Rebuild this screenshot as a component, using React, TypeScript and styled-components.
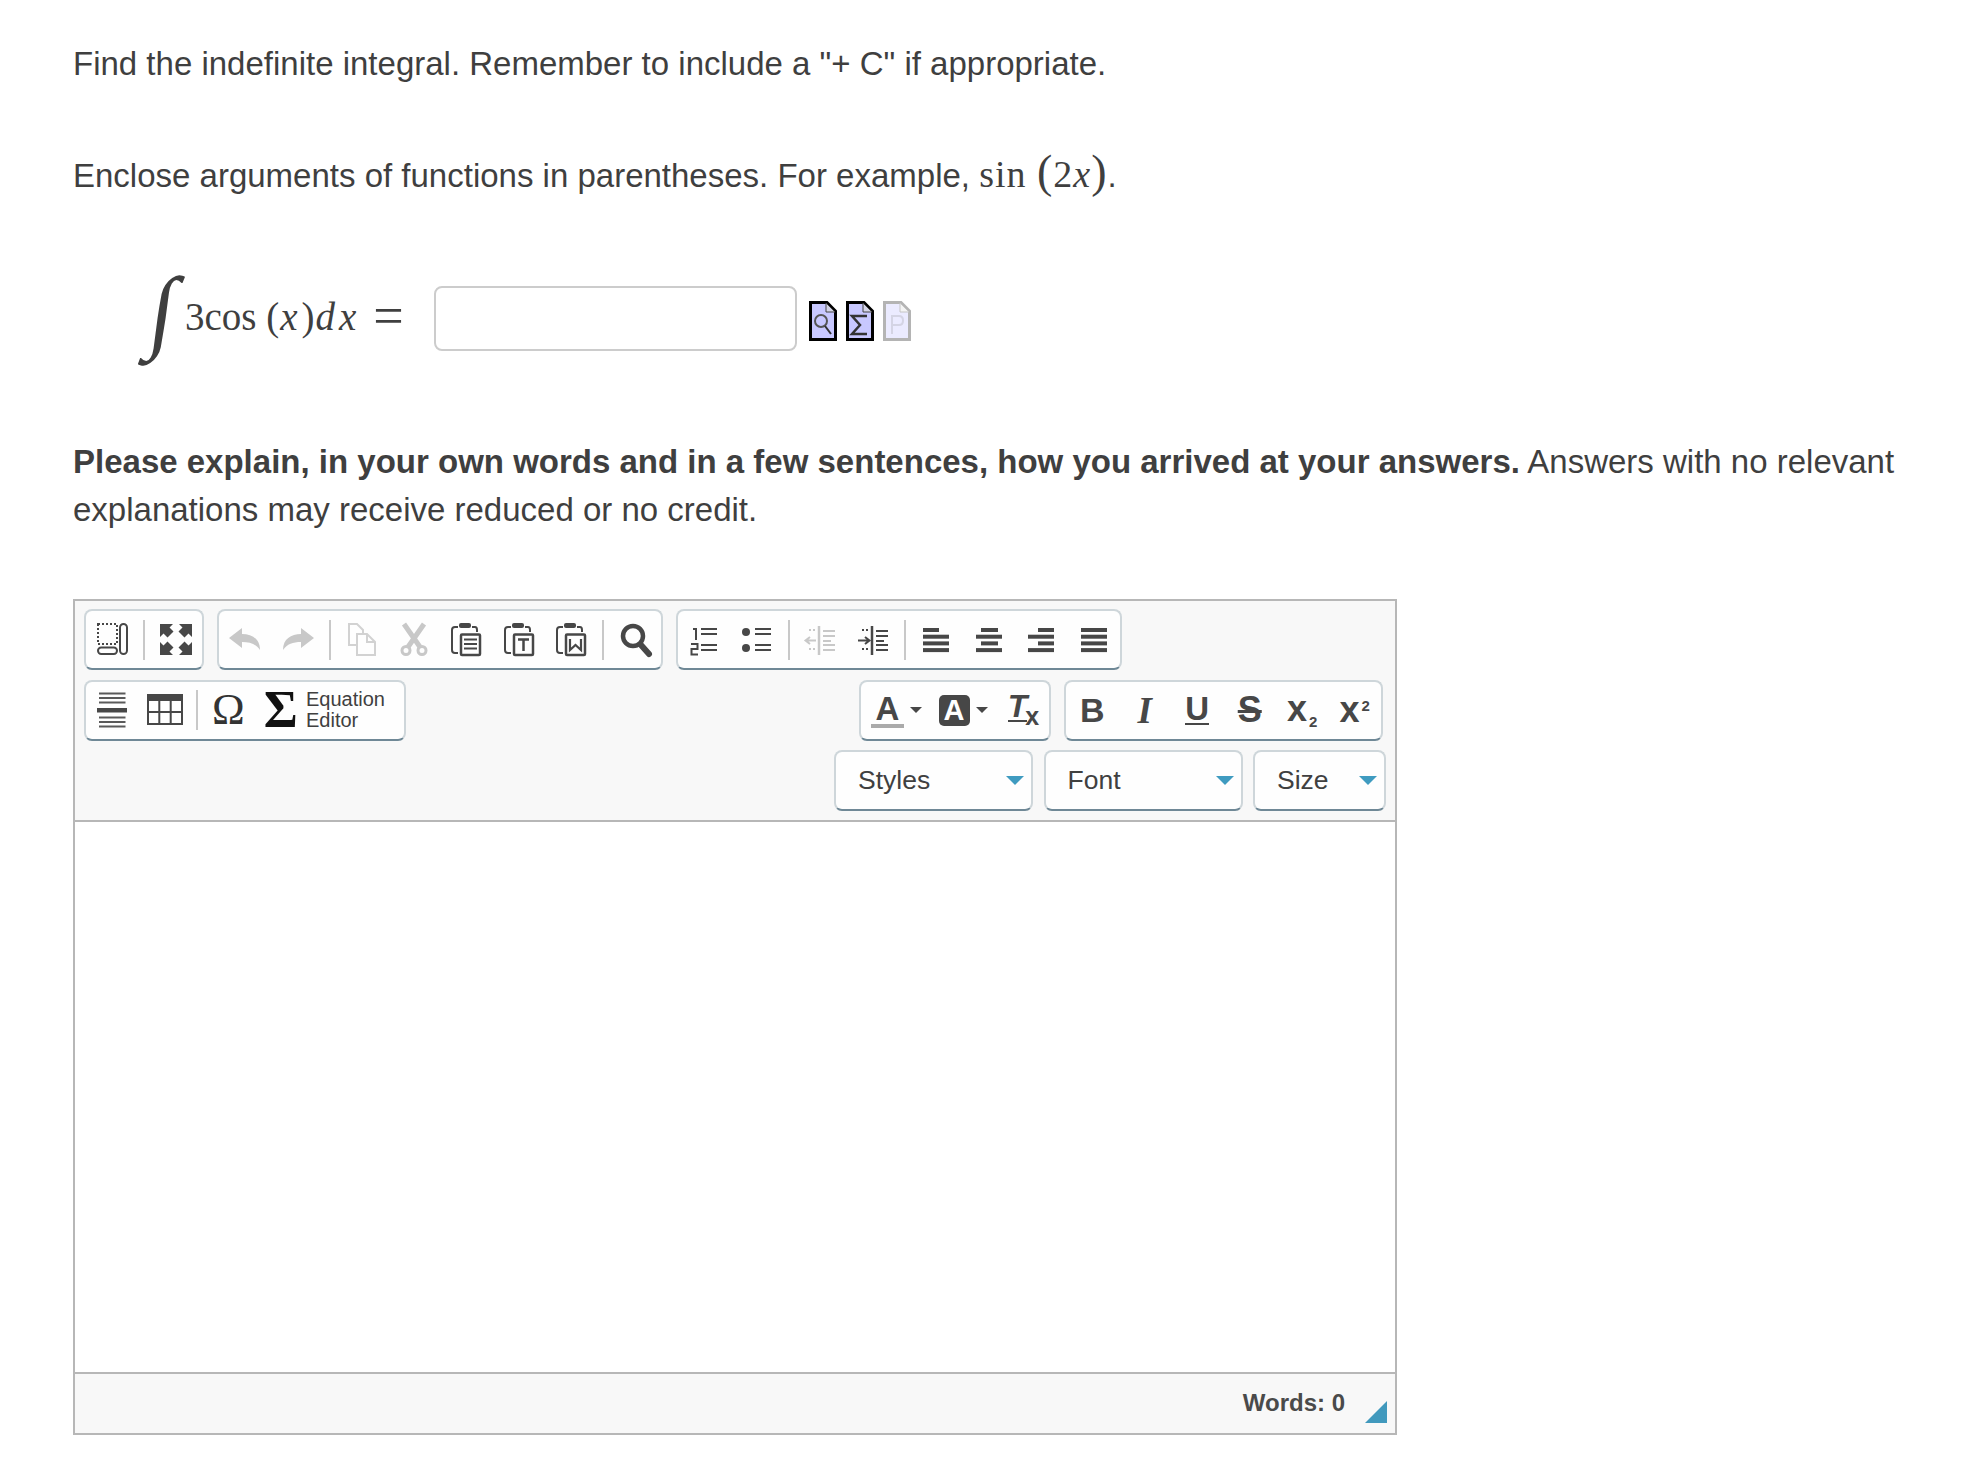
import React from 'react';
import styled, {createGlobalStyle} from 'styled-components';

const GlobalStyle = createGlobalStyle`
  html, body {
    margin: 0;
    padding: 0;
    background: white;
    color: #3f3f3f;
    font-family: "Liberation Sans", Arial, sans-serif;
  }
`;

const Page = styled.div`
  padding: 40px 50px 0 73px;
`;

const Paragraph = styled.p`
  margin: 0;
  font-size: 33px;
  line-height: 47px;

  & + & {
    margin-top: 65px;
  }
`;

const Explanation = styled(Paragraph)`
  margin-top: 75px;
  line-height: 47.5px;
`;

const InlineMath = styled.span`
  font-family: "Liberation Serif", serif;
  font-size: 38px;
  line-height: 0;
  letter-spacing: 1px;
`;

const Var = styled.i`
  font-family: "Liberation Serif", serif;
`;

const Paren = styled.span`
  font-family: "Liberation Serif", serif;
  font-size: 46px;
  line-height: 0;
`;

const MathRow = styled.div`
  display: flex;
  align-items: center;
  height: 90px;
  margin-top: 74px;
  padding-left: 68px;
`;

const IntegralSign = styled.span`
  width: 44px;
  margin-top: -16px;
  font-family: "Liberation Serif", serif;
  font-size: 92px;
  line-height: 92px;
  text-align: center;
  transform: skewX(-8deg);
`;

const MathExpr = styled.span`
  width: 249px;
  margin-top: -4px;
  font-family: "Liberation Serif", serif;
  font-size: 39px;
  white-space: nowrap;
`;

const MathVar = styled(Var)`
  letter-spacing: 4px;
  padding-left: 1px;
`;

const Equals = styled.span`
  margin-left: 13px;
  font-size: 54px;
  line-height: 0;
  vertical-align: -4px;
`;

const AnswerInput = styled.input`
  box-sizing: border-box;
  width: 363px;
  height: 65px;
  border: 2px solid #cccccc;
  border-radius: 8px;
  background: white;
  margin-top: 1px;
`;

const FileIcons = styled.div`
  display: flex;
  gap: 9px;
  margin: 5px 0 0 12px;
`;

const Editor = styled.div`
  box-sizing: border-box;
  width: 1324px;
  margin-top: 65.5px;
  border: 2px solid #b7b7b7;
  background: #f8f8f8;
`;

const Toolbar = styled.div`
  display: flex;
  flex-direction: column;
  gap: 9.5px;
  padding: 8.5px 9px 9px;
  border-bottom: 2px solid #b7b7b7;
`;

const ToolRow = styled.div<{$right?: boolean}>`
  display: flex;
  gap: 13px;
  justify-content: ${p => p.$right ? 'flex-end' : 'flex-start'};
`;

const SpacedRow = styled(ToolRow)`
  justify-content: space-between;
  padding-right: 3px;
`;

const ComboRow = styled(ToolRow)`
  gap: 10.5px;
`;

const Group = styled.div`
  box-sizing: border-box;
  display: flex;
  align-items: center;
  height: 61px;
  padding: 0;
  background: #fefefe;
  border: 2px solid #ced6da;
  border-bottom-color: #6f8896;
  border-radius: 8px;
`;

const Button = styled.span<{$w?: number}>`
  display: flex;
  align-items: center;
  justify-content: center;
  flex: none;
  width: ${p => p.$w ?? 52.5}px;
  height: 56px;
`;

const Separator = styled.span`
  flex: none;
  width: 2px;
  height: 40px;
  margin: 0 4.5px;
  background: #c8c8c8;
`;

const Icon = styled.svg`
  display: block;
  overflow: visible;
  width: 32px;
  height: 32px;
`;

const TableIcon = styled(Icon)`
  width: 36px;
`;

const SymbolGlyph = styled.span<{$size: number; $color: string; $bold?: boolean}>`
  font-family: "Liberation Serif", serif;
  font-weight: ${p => p.$bold ? 700 : 400};
  font-size: ${p => p.$size}px;
  line-height: 1;
  color: ${p => p.$color};
`;

const EquationLabel = styled.span`
  width: 98px;
  margin-left: -1px;
  font-size: 20px;
  line-height: 21.5px;
  color: #404040;
`;

const Glyph = styled.span<{$serif?: boolean; $italic?: boolean; $size?: number}>`
  font-family: ${p => p.$serif ? '"Liberation Serif"' : '"Liberation Sans"'}, serif;
  font-style: ${p => p.$italic ? 'italic' : 'normal'};
  font-weight: 700;
  font-size: ${p => p.$size ?? 33}px;
  line-height: 1;
  color: #474747;
  white-space: nowrap;
`;

const UnderGlyph = styled(Glyph)`
  display: inline-block;
  line-height: 26px;
  height: 27px;
  border-bottom: 2.5px solid #474747;
`;

const StrikeGlyph = styled(Glyph)`
  font-size: 36px;
  text-decoration: line-through;
  text-decoration-thickness: 3px;
`;

const TinyNumber = styled.span<{$up?: boolean}>`
  margin-left: 2px;
  font-size: 15px;
  font-weight: 700;
  vertical-align: ${p => p.$up ? '11px' : '-6px'};
`;

const ColorA = styled(Glyph)`
  display: block;
  width: 33px;
  height: 30px;
  line-height: 29px;
  text-align: center;
  border-bottom: 4px solid #aaaaaa;
  margin: 2px 0 0 5px;
`;

const BackA = styled(Glyph)`
  display: block;
  width: 31px;
  height: 31px;
  line-height: 31px;
  font-size: 29px;
  text-align: center;
  color: white;
  background: #474747;
  border-radius: 5px;
  margin-left: 6px;
`;

const Caret = styled.span`
  width: 0;
  height: 0;
  margin-left: 6px;
  border-left: 6px solid transparent;
  border-right: 6px solid transparent;
  border-top: 6px solid #474747;
`;

const ClearFormat = styled.span`
  display: flex;
  align-items: flex-end;
  margin-left: 5px;
`;

const ClearT = styled(Glyph)`
  display: inline-block;
  font-size: 32px;
  line-height: 25px;
  height: 26px;
  border-bottom: 2px solid #474747;
  margin-bottom: 4px;
`;

const ClearX = styled(Glyph)`
  font-size: 25px;
  line-height: 19px;
  margin-left: -2px;
`;

const Combo = styled.div<{$w: number}>`
  box-sizing: border-box;
  display: flex;
  align-items: center;
  justify-content: space-between;
  width: ${p => p.$w}px;
  height: 61px;
  padding: 0 7px 0 22px;
  background: #fefefe;
  border: 2px solid #ced6da;
  border-bottom-color: #6f8896;
  border-radius: 8px;
  font-size: 26.5px;
  color: #404040;
`;

const ComboArrow = styled.span`
  width: 0;
  height: 0;
  border-left: 9px solid transparent;
  border-right: 9px solid transparent;
  border-top: 9px solid #3f9bc0;
`;

const Content = styled.div`
  height: 550px;
  background: white;
  border-bottom: 2px solid #b7b7b7;
`;

const Footer = styled.div`
  display: flex;
  align-items: center;
  justify-content: flex-end;
  height: 59px;
  padding-right: 8px;
`;

const WordCount = styled.span`
  font-size: 24px;
  font-weight: 700;
  color: #4a4a4a;
  margin-top: -2px;
`;

const Resizer = styled.svg`
  width: 22px;
  height: 22px;
  margin-left: 20px;
  margin-top: 17px;
`;

const DARK = '#474747';
const GRAY = '#c8c8c8';

function FileIcon({faded, children}: { faded?: boolean; children: React.ReactNode }) {
  const line = faded ? '#b4b4b4' : '#000';
  const fill = faded ? '#ebebff' : '#c8c8ff';
  return (
    <svg width="28" height="40" viewBox="0 0 28 40">
      <path d="M1.5 1.5H18L26.5 10V38.5H1.5Z" fill={fill} stroke={line} strokeWidth="3"/>
      <path d="M17 2V11H26Z" fill={faded ? '#f4f4f4' : '#d5d5e8'} stroke={faded ? '#c4c4c4' : '#444'} strokeWidth="1"/>
      {children}
    </svg>
  );
}

function Blocks() {
  return <Icon viewBox="0 0 32 32" fill="none" stroke={DARK} strokeWidth="2">
    <rect x="2" y="0" width="19" height="20" strokeDasharray="2 2"/>
    <rect x="24" y="0" width="7" height="30" rx="3.5"/>
    <rect x="2" y="23.5" width="19" height="6.5" rx="3.2"/>
  </Icon>;
}

function Maximize() {
  const corner = '0,0 13,0 9.500,3.500 13.500,7.500 7.500,13.500 3.500,9.500 0,13';
  return <Icon viewBox="0 0 32 32" fill={DARK}>
    <polygon points={corner}/>
    <polygon points={corner} transform="translate(32 0) scale(-1 1)"/>
    <polygon points={corner} transform="translate(0 31) scale(1 -1)"/>
    <polygon points={corner} transform="translate(32 31) scale(-1 -1)"/>
  </Icon>;
}

function Undo({flip}: { flip?: boolean }) {
  return <Icon viewBox="0 0 32 32" fill={GRAY}>
    <path d="M0 14L13 4V10C23 10 31 15 31 26C27 20 21 18 13 18V24Z"
          transform={flip ? 'translate(32 0) scale(-1 1)' : undefined}/>
  </Icon>;
}

function Copy() {
  return <Icon viewBox="0 0 32 32" fill="none" stroke="#d2d2d2" strokeWidth="2">
    <path d="M12 21H4V0H12L18 6V10"/>
    <path d="M12 10H22L30 18V31H12Z"/>
    <path d="M22 10V18H30"/>
  </Icon>;
}

function Cut() {
  return <Icon viewBox="0 0 32 32" fill="none" stroke={GRAY}>
    <path d="M6 0L22 23M26 0L10 23" strokeWidth="5"/>
    <circle cx="8" cy="26.500" r="4" strokeWidth="3"/>
    <circle cx="24" cy="26.500" r="4" strokeWidth="3"/>
  </Icon>;
}

function Paste({children}: { children: React.ReactNode }) {
  return <Icon viewBox="0 0 32 32" fill="none" stroke={DARK} strokeWidth="2">
    <path d="M8 3H5Q2 3 2 6V26Q2 29 5 29H8M22 3H25Q27 3 27 6V8"/>
    <rect x="9" y="-1" width="12" height="5" rx="2" fill={DARK} stroke="none"/>
    <rect x="11" y="10.5" width="19" height="20.5" rx="1" strokeWidth="2.5"/>
    {children}
  </Icon>;
}

function Find() {
  return <Icon viewBox="0 0 32 32" fill="none" stroke={DARK}>
    <circle cx="14" cy="12" r="10" strokeWidth="4.5"/>
    <path d="M22 21L30 30" strokeWidth="6" strokeLinecap="round"/>
  </Icon>;
}

function NumberedList() {
  return <Icon viewBox="0 0 32 32" fill="none" stroke={DARK} strokeWidth="2">
    <path d="M13 5H29M13 10H29M13 21H29M13 26H29"/>
    <path d="M5 5H8V16M3 20H9.500V25H3.500V30.500H10"/>
  </Icon>;
}

function BulletList() {
  return <Icon viewBox="0 0 32 32" fill={DARK} stroke={DARK} strokeWidth="2">
    <circle cx="5" cy="8" r="4" stroke="none"/>
    <circle cx="5" cy="24" r="4" stroke="none"/>
    <path d="M14 5H30M14 10H30M14 21H30M14 26H30"/>
  </Icon>;
}

function Indent({out}: { out?: boolean }) {
  const color = out ? '#c8c8c8' : DARK;
  return <Icon viewBox="0 0 32 32" fill={color} stroke={color} strokeWidth="2">
    <path d="M15 2V31" strokeWidth="2.5"/>
    <path d="M19 7H31M19 12H31M19 17H27M19 21H31M19 26H31"/>
    <path d="M6 5V9M10 5V9M6 24V28M10 24V28" strokeDasharray="2 2"/>
    {out
      ? <path d="M12 16.500H3M6 13L1.500 16.500L6 20" fill="none"/>
      : <path d="M1 16.500H11M8 13L12.500 16.500L8 20" fill="none"/>}
  </Icon>;
}

function Align({bars}: { bars: [number, number][] }) {
  return <Icon viewBox="0 0 32 32" fill={DARK}>
    {bars.map(([x, w], i) => <rect key={i} x={x} y={4 + i * 6.700} width={w} height="4"/>)}
  </Icon>;
}

function HorizontalRule() {
  return <Icon viewBox="0 0 32 32" stroke="#5a5a5a" strokeWidth="1.800">
    <path d="M3 -0.500H29.500M3 4H29.500M3 8.500H29.500M3 23.500H29.500M3 28H29.500M3 32.500H29.500"/>
    <rect x="1" y="14" width="30" height="4.500" fill={DARK} stroke="none"/>
  </Icon>;
}

function Table() {
  return <TableIcon viewBox="0 0 36 32" fill="none" stroke={DARK} strokeWidth="2">
    <rect x="1" y="1" width="34" height="29"/>
    <rect x="0" y="0" width="36" height="7" fill={DARK} stroke="none"/>
    <path d="M12.300 7V30M23.700 7V30M1 18H35"/>
  </TableIcon>;
}

function App() {
  return (
    <Page>
      <GlobalStyle/>
      <Paragraph>Find the indefinite integral. Remember to include a "+ C" if appropriate.</Paragraph>
      <Paragraph>
        Enclose arguments of functions in parentheses. For example, <InlineMath>sin <Paren>(</Paren>2<Var>x</Var><Paren>)</Paren></InlineMath>.
      </Paragraph>

      <MathRow>
        <IntegralSign>∫</IntegralSign>
        <MathExpr>3cos (<MathVar>x</MathVar>)<MathVar>dx</MathVar><Equals>=</Equals></MathExpr>
        <AnswerInput type="text"/>
        <FileIcons>
          <FileIcon>
            <circle cx="12" cy="20" r="6" fill="none" stroke="#555" strokeWidth="2"/>
            <path d="M16 25L22 33" stroke="#333" strokeWidth="2"/>
          </FileIcon>
          <FileIcon>
            <path d="M21 15H6L14 24L6 33H21" fill="none" stroke="#333" strokeWidth="2.500"/>
          </FileIcon>
          <FileIcon faded>
            <path d="M9 33V15H16Q20 15 20 19.500Q20 24 16 24H9" fill="none" stroke="#d4d4e4" strokeWidth="2"/>
          </FileIcon>
        </FileIcons>
      </MathRow>

      <Explanation>
        <b>Please explain, in your own words and in a few sentences, how you arrived at your answers.</b> Answers with no relevant explanations may receive reduced or no credit.
      </Explanation>

      <Editor>
        <Toolbar>
          <ToolRow>
            <Group>
              <Button><Blocks/></Button>
              <Separator/>
              <Button><Maximize/></Button>
            </Group>
            <Group>
              <Button><Undo/></Button>
              <Button><Undo flip/></Button>
              <Separator/>
              <Button><Copy/></Button>
              <Button><Cut/></Button>
              <Button>
                <Paste>
                  <path d="M14 15.500H27M14 20H27M14 24.500H27" strokeWidth="2.200"/>
                </Paste>
              </Button>
              <Button>
                <Paste>
                  <path d="M15 15.500H26M20.500 15.500V27" strokeWidth="2.500"/>
                </Paste>
              </Button>
              <Button>
                <Paste>
                  <path d="M15 15V26L20.500 21L26 26V15" strokeWidth="2.200"/>
                </Paste>
              </Button>
              <Separator/>
              <Button><Find/></Button>
            </Group>
            <Group>
              <Button><NumberedList/></Button>
              <Button><BulletList/></Button>
              <Separator/>
              <Button><Indent out/></Button>
              <Button><Indent/></Button>
              <Separator/>
              <Button><Align bars={[[3, 16], [3, 26], [3, 26], [3, 26]]}/></Button>
              <Button><Align bars={[[8, 17], [3, 26], [8, 17], [3, 26]]}/></Button>
              <Button><Align bars={[[13, 16], [3, 26], [13, 16], [3, 26]]}/></Button>
              <Button><Align bars={[[3, 26], [3, 26], [3, 26], [3, 26]]}/></Button>
            </Group>
          </ToolRow>

          <SpacedRow>
            <Group>
              <Button><HorizontalRule/></Button>
              <Button><Table/></Button>
              <Separator/>
              <Button><SymbolGlyph $size={44} $color="#333">Ω</SymbolGlyph></Button>
              <Button><SymbolGlyph $size={52} $color="#111" $bold>Σ</SymbolGlyph></Button>
              <EquationLabel>Equation Editor</EquationLabel>
            </Group>
            <ToolRow>
              <Group>
                <Button $w={66}><ColorA>A</ColorA><Caret/></Button>
                <Button $w={66}><BackA>A</BackA><Caret/></Button>
                <Button $w={56}>
                  <ClearFormat><ClearT $italic>T</ClearT><ClearX>x</ClearX></ClearFormat>
                </Button>
              </Group>
              <Group>
                <Button><Glyph $size={34}>B</Glyph></Button>
                <Button><Glyph $serif $italic $size={37}>I</Glyph></Button>
                <Button><UnderGlyph>U</UnderGlyph></Button>
                <Button><StrikeGlyph>S</StrikeGlyph></Button>
                <Button><Glyph $size={36}>x<TinyNumber>2</TinyNumber></Glyph></Button>
                <Button><Glyph $size={36}>x<TinyNumber $up>2</TinyNumber></Glyph></Button>
              </Group>
            </ToolRow>
          </SpacedRow>

          <ComboRow $right>
            <Combo $w={199}>Styles<ComboArrow/></Combo>
            <Combo $w={199}>Font<ComboArrow/></Combo>
            <Combo $w={133}>Size<ComboArrow/></Combo>
          </ComboRow>
        </Toolbar>

        <Content/>

        <Footer>
          <WordCount>Words: 0</WordCount>
          <Resizer viewBox="0 0 22 22">
            <path d="M22 0V22H0Z" fill="#4199bd"/>
          </Resizer>
        </Footer>
      </Editor>
    </Page>
  );
}

export default App;
